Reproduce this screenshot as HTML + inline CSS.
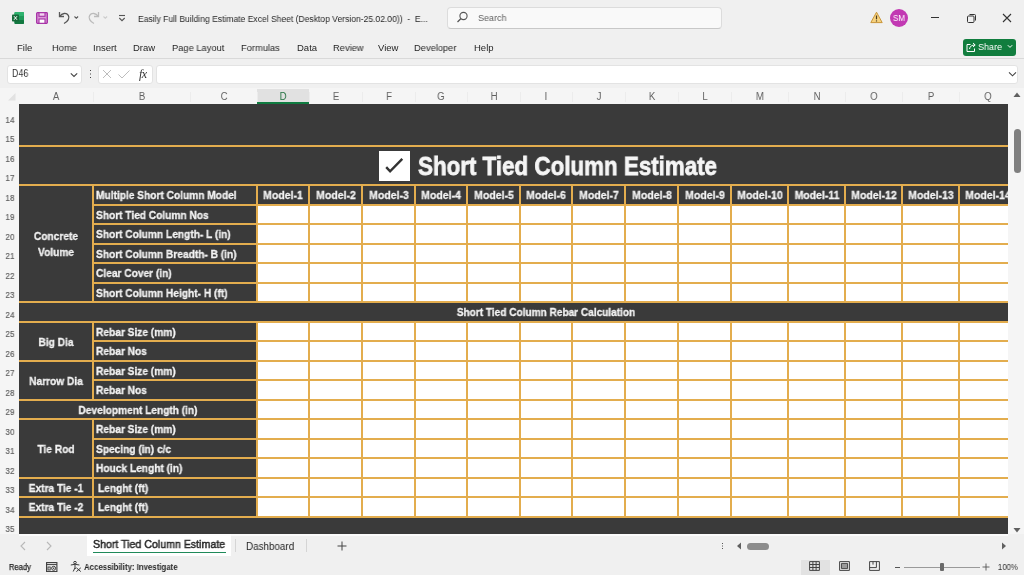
<!DOCTYPE html>
<html><head><meta charset="utf-8"><style>
html,body{margin:0;padding:0;}
body{width:1024px;height:575px;overflow:hidden;position:relative;background:#f0f0f0;font-family:'Liberation Sans', sans-serif;}
div,svg{position:absolute;}
div div, div svg{position:absolute;}
.t{white-space:nowrap;line-height:0;will-change:transform;}
</style></head><body>
<svg style="left:12px;top:12px" width="12" height="12" viewBox="0 0 12 12"><rect x="2.5" y="0" width="9.5" height="12" rx="1.2" fill="#1f9a5a"/><rect x="2.5" y="0" width="9.5" height="4" rx="1" fill="#2fb36f"/><rect x="2.5" y="8" width="9.5" height="4" rx="1" fill="#127840"/><rect x="0" y="2.5" width="7" height="7" rx="0.8" fill="#156b3a"/><path d="M2 4.2 L5 7.8 M5 4.2 L2 7.8" stroke="#fff" stroke-width="1"/></svg>
<svg style="left:36px;top:12px" width="12" height="12" viewBox="0 0 12 12"><rect x="0.7" y="0.7" width="10.6" height="10.6" rx="0.8" fill="#dc9ad8" stroke="#a52fa5" stroke-width="1.3"/><rect x="3" y="0.7" width="6" height="3.6" fill="#f3d6f1" stroke="#a52fa5" stroke-width="1.1"/><rect x="3" y="7" width="6" height="4.3" fill="#fff" stroke="#a52fa5" stroke-width="1.1"/></svg>
<svg style="left:57px;top:10px" width="24" height="15" viewBox="0 0 24 15"><path d="M2.5 2 V6.5 H7" fill="none" stroke="#5a5a5a" stroke-width="1.3"/><path d="M2.8 6.3 C5 3 9.5 2.5 11.3 5.3 C13 8 11 11.5 7 13.5" fill="none" stroke="#555" stroke-width="1.3"/><path d="M17.5 6.5 L19.3 8.3 L21.1 6.5" fill="none" stroke="#555" stroke-width="1.1"/></svg>
<svg style="left:86px;top:10px" width="24" height="15" viewBox="0 0 24 15"><path d="M12.5 2 V6.5 H8" fill="none" stroke="#bbb" stroke-width="1.3"/><path d="M12.2 6.3 C10 3 5.5 2.5 3.7 5.3 C2 8 4 11.5 8 13.5" fill="none" stroke="#bbb" stroke-width="1.3"/><path d="M17.5 6.5 L19.3 8.3 L21.1 6.5" fill="none" stroke="#ccc" stroke-width="1.1"/></svg>
<svg style="left:117px;top:13px" width="10" height="10" viewBox="0 0 10 10"><path d="M2 2.5 H8" stroke="#555" stroke-width="1.1"/><path d="M2.3 5 L5 7.7 L7.7 5" fill="none" stroke="#555" stroke-width="1.1"/></svg>
<div class="t" style="left:137.8px;top:18.71px;font-size:9.2px;font-weight:400;color:#262626;transform:scaleX(0.93);transform-origin:0 0;">Easily Full Building Estimate Excel Sheet (Desktop Version-25.02.00))&nbsp; -&nbsp; E...</div>
<div style="left:446.5px;top:6.5px;width:275px;height:22px;background:#f9f9f9;border:1px solid #dcdcdc;border-bottom-color:#c8c8c8;border-radius:4px;box-sizing:border-box"></div>
<svg style="left:456px;top:11px" width="13" height="13" viewBox="0 0 13 13"><circle cx="7.5" cy="5" r="3.6" fill="none" stroke="#555" stroke-width="1.1"/><path d="M5 7.5 L1.5 11" stroke="#555" stroke-width="1.2"/></svg>
<div class="t" style="left:478px;top:18.21px;font-size:9.5px;font-weight:400;color:#616161;transform:scaleX(0.95);transform-origin:0 0;">Search</div>
<svg style="left:870px;top:11px" width="13" height="13" viewBox="0 0 13 13"><path d="M6.5 1.2 L12.2 11.6 H0.8 Z" fill="#f6d27e" stroke="#c9963a" stroke-width="1" stroke-linejoin="round"/><path d="M6.5 4.5 V8.3" stroke="#4a3a20" stroke-width="1.2"/><circle cx="6.5" cy="9.9" r="0.7" fill="#4a3a20"/></svg>
<div style="left:889.5px;top:8.5px;width:18.5px;height:18.5px;border-radius:50%;background:#c239b3"></div>
<div class="t" style="left:498.6px;width:800px;text-align:center;top:18.02px;font-size:8.6px;font-weight:400;color:#fff;transform:scaleX(0.92);transform-origin:50% 0;">SM</div>
<div style="left:930.5px;top:17px;width:8.5px;height:1px;background:#333"></div>
<svg style="left:966px;top:13px" width="11" height="11" viewBox="0 0 11 11"><rect x="1.5" y="3" width="6.5" height="6.5" rx="1" fill="none" stroke="#333" stroke-width="1"/><path d="M3.5 1.5 H8.5 Q9.5 1.5 9.5 2.5 V7.5" fill="none" stroke="#333" stroke-width="1"/></svg>
<svg style="left:1002px;top:13px" width="10" height="10" viewBox="0 0 10 10"><path d="M1 1 L9 9 M9 1 L1 9" stroke="#333" stroke-width="1.1"/></svg>
<div class="t" style="left:16.7px;top:47.51px;font-size:9.5px;font-weight:400;color:#262626;transform:scaleX(0.98);transform-origin:0 0;">File</div>
<div class="t" style="left:51.5px;top:47.51px;font-size:9.5px;font-weight:400;color:#262626;transform:scaleX(0.98);transform-origin:0 0;">Home</div>
<div class="t" style="left:93px;top:47.51px;font-size:9.5px;font-weight:400;color:#262626;transform:scaleX(0.98);transform-origin:0 0;">Insert</div>
<div class="t" style="left:132.8px;top:47.51px;font-size:9.5px;font-weight:400;color:#262626;transform:scaleX(0.98);transform-origin:0 0;">Draw</div>
<div class="t" style="left:171.6px;top:47.51px;font-size:9.5px;font-weight:400;color:#262626;transform:scaleX(0.98);transform-origin:0 0;">Page Layout</div>
<div class="t" style="left:241.4px;top:47.51px;font-size:9.5px;font-weight:400;color:#262626;transform:scaleX(0.98);transform-origin:0 0;">Formulas</div>
<div class="t" style="left:297.2px;top:47.51px;font-size:9.5px;font-weight:400;color:#262626;transform:scaleX(0.98);transform-origin:0 0;">Data</div>
<div class="t" style="left:333.4px;top:47.51px;font-size:9.5px;font-weight:400;color:#262626;transform:scaleX(0.98);transform-origin:0 0;">Review</div>
<div class="t" style="left:378.3px;top:47.51px;font-size:9.5px;font-weight:400;color:#262626;transform:scaleX(0.98);transform-origin:0 0;">View</div>
<div class="t" style="left:413.5px;top:47.51px;font-size:9.5px;font-weight:400;color:#262626;transform:scaleX(0.98);transform-origin:0 0;">Developer</div>
<div class="t" style="left:474px;top:47.51px;font-size:9.5px;font-weight:400;color:#262626;transform:scaleX(0.98);transform-origin:0 0;">Help</div>
<div style="left:962.5px;top:38.5px;width:53px;height:17.5px;border-radius:3px;background:#117d3e"></div>
<svg style="left:965px;top:41px" width="12" height="12" viewBox="0 0 12 12"><path d="M5.5 3.5 H2 V10.5 H9.5 V7.5" fill="none" stroke="#fff" stroke-width="1"/><path d="M4.5 8 C5 5 7 4 10 4 M8 2 L10.2 4 L8 6" fill="none" stroke="#fff" stroke-width="1"/></svg>
<div class="t" style="left:978.3px;top:47.21px;font-size:9.5px;font-weight:400;color:#fff;transform:scaleX(0.95);transform-origin:0 0;">Share</div>
<svg style="left:1007px;top:44px" width="6" height="5" viewBox="0 0 6 5"><path d="M0.8 1.2 L3 3.4 L5.2 1.2" fill="none" stroke="#fff" stroke-width="1"/></svg>
<div style="left:0;top:58px;width:1024px;height:1px;background:#d9d9d9"></div>
<div style="left:6.5px;top:64.5px;width:75px;height:19px;background:#fff;border:1px solid #e3e3e3;border-radius:3px;box-sizing:border-box"></div>
<div class="t" style="left:11.7px;top:74.43px;font-size:10.3px;font-weight:400;color:#333;transform:scaleX(0.86);transform-origin:0 0;">D46</div>
<svg style="left:70px;top:72px" width="8" height="6" viewBox="0 0 8 6"><path d="M0.8 1.3 L4 4.5 L7.2 1.3" fill="none" stroke="#444" stroke-width="1.1"/></svg>
<div style="left:89.5px;top:70px;width:1.3px;height:1.3px;background:#444;box-shadow:0 3.5px 0 #444,0 7px 0 #444"></div>
<div style="left:97.5px;top:64.5px;width:55px;height:19px;background:#fff;border:1px solid #e3e3e3;border-radius:3px;box-sizing:border-box"></div>
<svg style="left:101px;top:68px" width="12" height="12" viewBox="0 0 12 12"><path d="M2 2 L10 10 M10 2 L2 10" stroke="#bdbdbd" stroke-width="1"/></svg>
<svg style="left:117px;top:68px" width="14" height="12" viewBox="0 0 14 12"><path d="M1.5 6.5 L5 10 L12.5 2.5" fill="none" stroke="#bdbdbd" stroke-width="1"/></svg>
<div class="t" style="left:138.8px;top:74.04px;font-size:12px;font-weight:400;color:#333;transform:scaleX(1.0);transform-origin:0 0;font-family:'Liberation Serif';font-style:italic;letter-spacing:-0.5px;">fx</div>
<div style="left:156px;top:64.5px;width:862px;height:19px;background:#fff;border:1px solid #e3e3e3;border-radius:3px;box-sizing:border-box"></div>
<svg style="left:1007.5px;top:70.5px" width="9" height="6" viewBox="0 0 9 6"><path d="M1 1.3 L4.5 4.8 L8 1.3" fill="none" stroke="#444" stroke-width="1.1"/></svg>
<div style="left:0;top:88px;width:1008px;height:16px;background:#f5f5f5"></div>
<div style="left:257px;top:89px;width:52px;height:15px;background:#e1e1e1"></div>
<div style="left:257px;top:102px;width:52px;height:2px;background:#107c41"></div>
<div class="t" style="left:-344.0px;width:800px;text-align:center;top:96.63px;font-size:10px;font-weight:400;color:#5f5f5f;transform:scaleX(0.95);transform-origin:50% 0;">A</div>
<div style="left:93px;top:92px;width:1px;height:10px;background:#ececec"></div>
<div class="t" style="left:-258.5px;width:800px;text-align:center;top:96.63px;font-size:10px;font-weight:400;color:#5f5f5f;transform:scaleX(0.95);transform-origin:50% 0;">B</div>
<div style="left:190px;top:92px;width:1px;height:10px;background:#ececec"></div>
<div class="t" style="left:-176.5px;width:800px;text-align:center;top:96.63px;font-size:10px;font-weight:400;color:#5f5f5f;transform:scaleX(0.95);transform-origin:50% 0;">C</div>
<div style="left:257px;top:92px;width:1px;height:10px;background:#ececec"></div>
<div class="t" style="left:-117.0px;width:800px;text-align:center;top:96.63px;font-size:10px;font-weight:400;color:#1e6e3c;transform:scaleX(0.95);transform-origin:50% 0;">D</div>
<div style="left:309px;top:92px;width:1px;height:10px;background:#ececec"></div>
<div class="t" style="left:-64.5px;width:800px;text-align:center;top:96.63px;font-size:10px;font-weight:400;color:#5f5f5f;transform:scaleX(0.95);transform-origin:50% 0;">E</div>
<div style="left:362px;top:92px;width:1px;height:10px;background:#ececec"></div>
<div class="t" style="left:-11.5px;width:800px;text-align:center;top:96.63px;font-size:10px;font-weight:400;color:#5f5f5f;transform:scaleX(0.95);transform-origin:50% 0;">F</div>
<div style="left:415px;top:92px;width:1px;height:10px;background:#ececec"></div>
<div class="t" style="left:41.0px;width:800px;text-align:center;top:96.63px;font-size:10px;font-weight:400;color:#5f5f5f;transform:scaleX(0.95);transform-origin:50% 0;">G</div>
<div style="left:467px;top:92px;width:1px;height:10px;background:#ececec"></div>
<div class="t" style="left:93.5px;width:800px;text-align:center;top:96.63px;font-size:10px;font-weight:400;color:#5f5f5f;transform:scaleX(0.95);transform-origin:50% 0;">H</div>
<div style="left:520px;top:92px;width:1px;height:10px;background:#ececec"></div>
<div class="t" style="left:146.0px;width:800px;text-align:center;top:96.63px;font-size:10px;font-weight:400;color:#5f5f5f;transform:scaleX(0.95);transform-origin:50% 0;">I</div>
<div style="left:572px;top:92px;width:1px;height:10px;background:#ececec"></div>
<div class="t" style="left:198.5px;width:800px;text-align:center;top:96.63px;font-size:10px;font-weight:400;color:#5f5f5f;transform:scaleX(0.95);transform-origin:50% 0;">J</div>
<div style="left:625px;top:92px;width:1px;height:10px;background:#ececec"></div>
<div class="t" style="left:251.5px;width:800px;text-align:center;top:96.63px;font-size:10px;font-weight:400;color:#5f5f5f;transform:scaleX(0.95);transform-origin:50% 0;">K</div>
<div style="left:678px;top:92px;width:1px;height:10px;background:#ececec"></div>
<div class="t" style="left:304.5px;width:800px;text-align:center;top:96.63px;font-size:10px;font-weight:400;color:#5f5f5f;transform:scaleX(0.95);transform-origin:50% 0;">L</div>
<div style="left:731px;top:92px;width:1px;height:10px;background:#ececec"></div>
<div class="t" style="left:359.5px;width:800px;text-align:center;top:96.63px;font-size:10px;font-weight:400;color:#5f5f5f;transform:scaleX(0.95);transform-origin:50% 0;">M</div>
<div style="left:788px;top:92px;width:1px;height:10px;background:#ececec"></div>
<div class="t" style="left:416.5px;width:800px;text-align:center;top:96.63px;font-size:10px;font-weight:400;color:#5f5f5f;transform:scaleX(0.95);transform-origin:50% 0;">N</div>
<div style="left:845px;top:92px;width:1px;height:10px;background:#ececec"></div>
<div class="t" style="left:473.5px;width:800px;text-align:center;top:96.63px;font-size:10px;font-weight:400;color:#5f5f5f;transform:scaleX(0.95);transform-origin:50% 0;">O</div>
<div style="left:902px;top:92px;width:1px;height:10px;background:#ececec"></div>
<div class="t" style="left:530.5px;width:800px;text-align:center;top:96.63px;font-size:10px;font-weight:400;color:#5f5f5f;transform:scaleX(0.95);transform-origin:50% 0;">P</div>
<div style="left:959px;top:92px;width:1px;height:10px;background:#ececec"></div>
<div class="t" style="left:587.5px;width:800px;text-align:center;top:96.63px;font-size:10px;font-weight:400;color:#5f5f5f;transform:scaleX(0.95);transform-origin:50% 0;">Q</div>
<svg style="left:6px;top:90px" width="12" height="13" viewBox="0 0 12 13"><path d="M11 2 L11 11 L2 11 Z" fill="#e6e6e6"/></svg>
<div style="left:0;top:104px;width:19px;height:430px;background:#f5f5f5"></div>
<div class="t" style="left:-389.7px;width:800px;text-align:center;top:100.44px;font-size:9.7px;font-weight:400;color:#5f5f5f;transform:scaleX(0.84);transform-origin:50% 0;-webkit-text-stroke:0.2px #5f5f5f;">13</div>
<div class="t" style="left:-389.7px;width:800px;text-align:center;top:119.94px;font-size:9.7px;font-weight:400;color:#5f5f5f;transform:scaleX(0.84);transform-origin:50% 0;-webkit-text-stroke:0.2px #5f5f5f;">14</div>
<div class="t" style="left:-389.7px;width:800px;text-align:center;top:139.44px;font-size:9.7px;font-weight:400;color:#5f5f5f;transform:scaleX(0.84);transform-origin:50% 0;-webkit-text-stroke:0.2px #5f5f5f;">15</div>
<div class="t" style="left:-389.7px;width:800px;text-align:center;top:158.94px;font-size:9.7px;font-weight:400;color:#5f5f5f;transform:scaleX(0.84);transform-origin:50% 0;-webkit-text-stroke:0.2px #5f5f5f;">16</div>
<div class="t" style="left:-389.7px;width:800px;text-align:center;top:178.44px;font-size:9.7px;font-weight:400;color:#5f5f5f;transform:scaleX(0.84);transform-origin:50% 0;-webkit-text-stroke:0.2px #5f5f5f;">17</div>
<div class="t" style="left:-389.7px;width:800px;text-align:center;top:197.94px;font-size:9.7px;font-weight:400;color:#5f5f5f;transform:scaleX(0.84);transform-origin:50% 0;-webkit-text-stroke:0.2px #5f5f5f;">18</div>
<div class="t" style="left:-389.7px;width:800px;text-align:center;top:217.44px;font-size:9.7px;font-weight:400;color:#5f5f5f;transform:scaleX(0.84);transform-origin:50% 0;-webkit-text-stroke:0.2px #5f5f5f;">19</div>
<div class="t" style="left:-389.7px;width:800px;text-align:center;top:236.94px;font-size:9.7px;font-weight:400;color:#5f5f5f;transform:scaleX(0.84);transform-origin:50% 0;-webkit-text-stroke:0.2px #5f5f5f;">20</div>
<div class="t" style="left:-389.7px;width:800px;text-align:center;top:256.44px;font-size:9.7px;font-weight:400;color:#5f5f5f;transform:scaleX(0.84);transform-origin:50% 0;-webkit-text-stroke:0.2px #5f5f5f;">21</div>
<div class="t" style="left:-389.7px;width:800px;text-align:center;top:275.94px;font-size:9.7px;font-weight:400;color:#5f5f5f;transform:scaleX(0.84);transform-origin:50% 0;-webkit-text-stroke:0.2px #5f5f5f;">22</div>
<div class="t" style="left:-389.7px;width:800px;text-align:center;top:295.44px;font-size:9.7px;font-weight:400;color:#5f5f5f;transform:scaleX(0.84);transform-origin:50% 0;-webkit-text-stroke:0.2px #5f5f5f;">23</div>
<div class="t" style="left:-389.7px;width:800px;text-align:center;top:314.94px;font-size:9.7px;font-weight:400;color:#5f5f5f;transform:scaleX(0.84);transform-origin:50% 0;-webkit-text-stroke:0.2px #5f5f5f;">24</div>
<div class="t" style="left:-389.7px;width:800px;text-align:center;top:334.44px;font-size:9.7px;font-weight:400;color:#5f5f5f;transform:scaleX(0.84);transform-origin:50% 0;-webkit-text-stroke:0.2px #5f5f5f;">25</div>
<div class="t" style="left:-389.7px;width:800px;text-align:center;top:353.94px;font-size:9.7px;font-weight:400;color:#5f5f5f;transform:scaleX(0.84);transform-origin:50% 0;-webkit-text-stroke:0.2px #5f5f5f;">26</div>
<div class="t" style="left:-389.7px;width:800px;text-align:center;top:373.44px;font-size:9.7px;font-weight:400;color:#5f5f5f;transform:scaleX(0.84);transform-origin:50% 0;-webkit-text-stroke:0.2px #5f5f5f;">27</div>
<div class="t" style="left:-389.7px;width:800px;text-align:center;top:392.94px;font-size:9.7px;font-weight:400;color:#5f5f5f;transform:scaleX(0.84);transform-origin:50% 0;-webkit-text-stroke:0.2px #5f5f5f;">28</div>
<div class="t" style="left:-389.7px;width:800px;text-align:center;top:412.44px;font-size:9.7px;font-weight:400;color:#5f5f5f;transform:scaleX(0.84);transform-origin:50% 0;-webkit-text-stroke:0.2px #5f5f5f;">29</div>
<div class="t" style="left:-389.7px;width:800px;text-align:center;top:431.94px;font-size:9.7px;font-weight:400;color:#5f5f5f;transform:scaleX(0.84);transform-origin:50% 0;-webkit-text-stroke:0.2px #5f5f5f;">30</div>
<div class="t" style="left:-389.7px;width:800px;text-align:center;top:451.44px;font-size:9.7px;font-weight:400;color:#5f5f5f;transform:scaleX(0.84);transform-origin:50% 0;-webkit-text-stroke:0.2px #5f5f5f;">31</div>
<div class="t" style="left:-389.7px;width:800px;text-align:center;top:470.94px;font-size:9.7px;font-weight:400;color:#5f5f5f;transform:scaleX(0.84);transform-origin:50% 0;-webkit-text-stroke:0.2px #5f5f5f;">32</div>
<div class="t" style="left:-389.7px;width:800px;text-align:center;top:490.44px;font-size:9.7px;font-weight:400;color:#5f5f5f;transform:scaleX(0.84);transform-origin:50% 0;-webkit-text-stroke:0.2px #5f5f5f;">33</div>
<div class="t" style="left:-389.7px;width:800px;text-align:center;top:509.94px;font-size:9.7px;font-weight:400;color:#5f5f5f;transform:scaleX(0.84);transform-origin:50% 0;-webkit-text-stroke:0.2px #5f5f5f;">34</div>
<div class="t" style="left:-389.7px;width:800px;text-align:center;top:529.44px;font-size:9.7px;font-weight:400;color:#5f5f5f;transform:scaleX(0.84);transform-origin:50% 0;-webkit-text-stroke:0.2px #5f5f5f;">35</div>
<div style="left:0;top:88px;width:19px;height:16px;background:#f5f5f5"></div>
<svg style="left:5px;top:90px" width="12" height="12" viewBox="0 0 12 12"><path d="M10.5 3 L10.5 10.5 L3 10.5 Z" fill="#e2e2e2"/></svg>
<div style="left:19px;top:104px;width:989px;height:430px;background:#3a3a3a;overflow:hidden">
<div style="left:238.00px;top:101.00px;width:759.00px;height:19.00px;background:#fff"></div>
<div style="left:238.00px;top:120.00px;width:759.00px;height:20.00px;background:#fff"></div>
<div style="left:238.00px;top:140.00px;width:759.00px;height:19.00px;background:#fff"></div>
<div style="left:238.00px;top:159.00px;width:759.00px;height:20.00px;background:#fff"></div>
<div style="left:238.00px;top:179.00px;width:759.00px;height:19.00px;background:#fff"></div>
<div style="left:238.00px;top:218.00px;width:759.00px;height:19.00px;background:#fff"></div>
<div style="left:238.00px;top:237.00px;width:759.00px;height:20.00px;background:#fff"></div>
<div style="left:238.00px;top:257.00px;width:759.00px;height:19.00px;background:#fff"></div>
<div style="left:238.00px;top:276.00px;width:759.00px;height:20.00px;background:#fff"></div>
<div style="left:238.00px;top:296.00px;width:759.00px;height:19.00px;background:#fff"></div>
<div style="left:238.00px;top:315.00px;width:759.00px;height:20.00px;background:#fff"></div>
<div style="left:238.00px;top:335.00px;width:759.00px;height:19.00px;background:#fff"></div>
<div style="left:238.00px;top:354.00px;width:759.00px;height:20.00px;background:#fff"></div>
<div style="left:238.00px;top:374.00px;width:759.00px;height:19.00px;background:#fff"></div>
<div style="left:238.00px;top:393.00px;width:759.00px;height:20.00px;background:#fff"></div>
<div style="left:-1.00px;top:41.00px;width:999.00px;height:2.00px;background:#e3ad4e"></div>
<div style="left:-1.00px;top:80.00px;width:999.00px;height:2.00px;background:#e3ad4e"></div>
<div style="left:73.00px;top:100.00px;width:925.00px;height:2.00px;background:#e3ad4e"></div>
<div style="left:73.00px;top:119.00px;width:925.00px;height:2.00px;background:#e3ad4e"></div>
<div style="left:73.00px;top:139.00px;width:925.00px;height:2.00px;background:#e3ad4e"></div>
<div style="left:73.00px;top:158.00px;width:925.00px;height:2.00px;background:#e3ad4e"></div>
<div style="left:73.00px;top:178.00px;width:925.00px;height:2.00px;background:#e3ad4e"></div>
<div style="left:-1.00px;top:197.00px;width:999.00px;height:2.00px;background:#e3ad4e"></div>
<div style="left:-1.00px;top:217.00px;width:999.00px;height:2.00px;background:#e3ad4e"></div>
<div style="left:73.00px;top:236.00px;width:925.00px;height:2.00px;background:#e3ad4e"></div>
<div style="left:-1.00px;top:256.00px;width:999.00px;height:2.00px;background:#e3ad4e"></div>
<div style="left:73.00px;top:275.00px;width:925.00px;height:2.00px;background:#e3ad4e"></div>
<div style="left:-1.00px;top:295.00px;width:999.00px;height:2.00px;background:#e3ad4e"></div>
<div style="left:-1.00px;top:314.00px;width:999.00px;height:2.00px;background:#e3ad4e"></div>
<div style="left:73.00px;top:334.00px;width:925.00px;height:2.00px;background:#e3ad4e"></div>
<div style="left:73.00px;top:353.00px;width:925.00px;height:2.00px;background:#e3ad4e"></div>
<div style="left:-1.00px;top:373.00px;width:999.00px;height:2.00px;background:#e3ad4e"></div>
<div style="left:-1.00px;top:392.00px;width:999.00px;height:2.00px;background:#e3ad4e"></div>
<div style="left:-1.00px;top:412.00px;width:999.00px;height:2.00px;background:#e3ad4e"></div>
<div style="left:73.00px;top:80.00px;width:2.00px;height:22.00px;background:#e3ad4e"></div>
<div style="left:237.00px;top:80.00px;width:2.00px;height:22.00px;background:#e3ad4e"></div>
<div style="left:289.00px;top:80.00px;width:2.00px;height:22.00px;background:#e3ad4e"></div>
<div style="left:342.00px;top:80.00px;width:2.00px;height:22.00px;background:#e3ad4e"></div>
<div style="left:395.00px;top:80.00px;width:2.00px;height:22.00px;background:#e3ad4e"></div>
<div style="left:447.00px;top:80.00px;width:2.00px;height:22.00px;background:#e3ad4e"></div>
<div style="left:500.00px;top:80.00px;width:2.00px;height:22.00px;background:#e3ad4e"></div>
<div style="left:552.00px;top:80.00px;width:2.00px;height:22.00px;background:#e3ad4e"></div>
<div style="left:605.00px;top:80.00px;width:2.00px;height:22.00px;background:#e3ad4e"></div>
<div style="left:658.00px;top:80.00px;width:2.00px;height:22.00px;background:#e3ad4e"></div>
<div style="left:711.00px;top:80.00px;width:2.00px;height:22.00px;background:#e3ad4e"></div>
<div style="left:768.00px;top:80.00px;width:2.00px;height:22.00px;background:#e3ad4e"></div>
<div style="left:825.00px;top:80.00px;width:2.00px;height:22.00px;background:#e3ad4e"></div>
<div style="left:882.00px;top:80.00px;width:2.00px;height:22.00px;background:#e3ad4e"></div>
<div style="left:939.00px;top:80.00px;width:2.00px;height:22.00px;background:#e3ad4e"></div>
<div style="left:73.00px;top:100.00px;width:2.00px;height:21.00px;background:#e3ad4e"></div>
<div style="left:237.00px;top:100.00px;width:2.00px;height:21.00px;background:#e3ad4e"></div>
<div style="left:289.00px;top:100.00px;width:2.00px;height:21.00px;background:#e3ad4e"></div>
<div style="left:342.00px;top:100.00px;width:2.00px;height:21.00px;background:#e3ad4e"></div>
<div style="left:395.00px;top:100.00px;width:2.00px;height:21.00px;background:#e3ad4e"></div>
<div style="left:447.00px;top:100.00px;width:2.00px;height:21.00px;background:#e3ad4e"></div>
<div style="left:500.00px;top:100.00px;width:2.00px;height:21.00px;background:#e3ad4e"></div>
<div style="left:552.00px;top:100.00px;width:2.00px;height:21.00px;background:#e3ad4e"></div>
<div style="left:605.00px;top:100.00px;width:2.00px;height:21.00px;background:#e3ad4e"></div>
<div style="left:658.00px;top:100.00px;width:2.00px;height:21.00px;background:#e3ad4e"></div>
<div style="left:711.00px;top:100.00px;width:2.00px;height:21.00px;background:#e3ad4e"></div>
<div style="left:768.00px;top:100.00px;width:2.00px;height:21.00px;background:#e3ad4e"></div>
<div style="left:825.00px;top:100.00px;width:2.00px;height:21.00px;background:#e3ad4e"></div>
<div style="left:882.00px;top:100.00px;width:2.00px;height:21.00px;background:#e3ad4e"></div>
<div style="left:939.00px;top:100.00px;width:2.00px;height:21.00px;background:#e3ad4e"></div>
<div style="left:73.00px;top:119.00px;width:2.00px;height:22.00px;background:#e3ad4e"></div>
<div style="left:237.00px;top:119.00px;width:2.00px;height:22.00px;background:#e3ad4e"></div>
<div style="left:289.00px;top:119.00px;width:2.00px;height:22.00px;background:#e3ad4e"></div>
<div style="left:342.00px;top:119.00px;width:2.00px;height:22.00px;background:#e3ad4e"></div>
<div style="left:395.00px;top:119.00px;width:2.00px;height:22.00px;background:#e3ad4e"></div>
<div style="left:447.00px;top:119.00px;width:2.00px;height:22.00px;background:#e3ad4e"></div>
<div style="left:500.00px;top:119.00px;width:2.00px;height:22.00px;background:#e3ad4e"></div>
<div style="left:552.00px;top:119.00px;width:2.00px;height:22.00px;background:#e3ad4e"></div>
<div style="left:605.00px;top:119.00px;width:2.00px;height:22.00px;background:#e3ad4e"></div>
<div style="left:658.00px;top:119.00px;width:2.00px;height:22.00px;background:#e3ad4e"></div>
<div style="left:711.00px;top:119.00px;width:2.00px;height:22.00px;background:#e3ad4e"></div>
<div style="left:768.00px;top:119.00px;width:2.00px;height:22.00px;background:#e3ad4e"></div>
<div style="left:825.00px;top:119.00px;width:2.00px;height:22.00px;background:#e3ad4e"></div>
<div style="left:882.00px;top:119.00px;width:2.00px;height:22.00px;background:#e3ad4e"></div>
<div style="left:939.00px;top:119.00px;width:2.00px;height:22.00px;background:#e3ad4e"></div>
<div style="left:73.00px;top:139.00px;width:2.00px;height:21.00px;background:#e3ad4e"></div>
<div style="left:237.00px;top:139.00px;width:2.00px;height:21.00px;background:#e3ad4e"></div>
<div style="left:289.00px;top:139.00px;width:2.00px;height:21.00px;background:#e3ad4e"></div>
<div style="left:342.00px;top:139.00px;width:2.00px;height:21.00px;background:#e3ad4e"></div>
<div style="left:395.00px;top:139.00px;width:2.00px;height:21.00px;background:#e3ad4e"></div>
<div style="left:447.00px;top:139.00px;width:2.00px;height:21.00px;background:#e3ad4e"></div>
<div style="left:500.00px;top:139.00px;width:2.00px;height:21.00px;background:#e3ad4e"></div>
<div style="left:552.00px;top:139.00px;width:2.00px;height:21.00px;background:#e3ad4e"></div>
<div style="left:605.00px;top:139.00px;width:2.00px;height:21.00px;background:#e3ad4e"></div>
<div style="left:658.00px;top:139.00px;width:2.00px;height:21.00px;background:#e3ad4e"></div>
<div style="left:711.00px;top:139.00px;width:2.00px;height:21.00px;background:#e3ad4e"></div>
<div style="left:768.00px;top:139.00px;width:2.00px;height:21.00px;background:#e3ad4e"></div>
<div style="left:825.00px;top:139.00px;width:2.00px;height:21.00px;background:#e3ad4e"></div>
<div style="left:882.00px;top:139.00px;width:2.00px;height:21.00px;background:#e3ad4e"></div>
<div style="left:939.00px;top:139.00px;width:2.00px;height:21.00px;background:#e3ad4e"></div>
<div style="left:73.00px;top:158.00px;width:2.00px;height:22.00px;background:#e3ad4e"></div>
<div style="left:237.00px;top:158.00px;width:2.00px;height:22.00px;background:#e3ad4e"></div>
<div style="left:289.00px;top:158.00px;width:2.00px;height:22.00px;background:#e3ad4e"></div>
<div style="left:342.00px;top:158.00px;width:2.00px;height:22.00px;background:#e3ad4e"></div>
<div style="left:395.00px;top:158.00px;width:2.00px;height:22.00px;background:#e3ad4e"></div>
<div style="left:447.00px;top:158.00px;width:2.00px;height:22.00px;background:#e3ad4e"></div>
<div style="left:500.00px;top:158.00px;width:2.00px;height:22.00px;background:#e3ad4e"></div>
<div style="left:552.00px;top:158.00px;width:2.00px;height:22.00px;background:#e3ad4e"></div>
<div style="left:605.00px;top:158.00px;width:2.00px;height:22.00px;background:#e3ad4e"></div>
<div style="left:658.00px;top:158.00px;width:2.00px;height:22.00px;background:#e3ad4e"></div>
<div style="left:711.00px;top:158.00px;width:2.00px;height:22.00px;background:#e3ad4e"></div>
<div style="left:768.00px;top:158.00px;width:2.00px;height:22.00px;background:#e3ad4e"></div>
<div style="left:825.00px;top:158.00px;width:2.00px;height:22.00px;background:#e3ad4e"></div>
<div style="left:882.00px;top:158.00px;width:2.00px;height:22.00px;background:#e3ad4e"></div>
<div style="left:939.00px;top:158.00px;width:2.00px;height:22.00px;background:#e3ad4e"></div>
<div style="left:73.00px;top:178.00px;width:2.00px;height:21.00px;background:#e3ad4e"></div>
<div style="left:237.00px;top:178.00px;width:2.00px;height:21.00px;background:#e3ad4e"></div>
<div style="left:289.00px;top:178.00px;width:2.00px;height:21.00px;background:#e3ad4e"></div>
<div style="left:342.00px;top:178.00px;width:2.00px;height:21.00px;background:#e3ad4e"></div>
<div style="left:395.00px;top:178.00px;width:2.00px;height:21.00px;background:#e3ad4e"></div>
<div style="left:447.00px;top:178.00px;width:2.00px;height:21.00px;background:#e3ad4e"></div>
<div style="left:500.00px;top:178.00px;width:2.00px;height:21.00px;background:#e3ad4e"></div>
<div style="left:552.00px;top:178.00px;width:2.00px;height:21.00px;background:#e3ad4e"></div>
<div style="left:605.00px;top:178.00px;width:2.00px;height:21.00px;background:#e3ad4e"></div>
<div style="left:658.00px;top:178.00px;width:2.00px;height:21.00px;background:#e3ad4e"></div>
<div style="left:711.00px;top:178.00px;width:2.00px;height:21.00px;background:#e3ad4e"></div>
<div style="left:768.00px;top:178.00px;width:2.00px;height:21.00px;background:#e3ad4e"></div>
<div style="left:825.00px;top:178.00px;width:2.00px;height:21.00px;background:#e3ad4e"></div>
<div style="left:882.00px;top:178.00px;width:2.00px;height:21.00px;background:#e3ad4e"></div>
<div style="left:939.00px;top:178.00px;width:2.00px;height:21.00px;background:#e3ad4e"></div>
<div style="left:73.00px;top:217.00px;width:2.00px;height:21.00px;background:#e3ad4e"></div>
<div style="left:237.00px;top:217.00px;width:2.00px;height:21.00px;background:#e3ad4e"></div>
<div style="left:289.00px;top:217.00px;width:2.00px;height:21.00px;background:#e3ad4e"></div>
<div style="left:342.00px;top:217.00px;width:2.00px;height:21.00px;background:#e3ad4e"></div>
<div style="left:395.00px;top:217.00px;width:2.00px;height:21.00px;background:#e3ad4e"></div>
<div style="left:447.00px;top:217.00px;width:2.00px;height:21.00px;background:#e3ad4e"></div>
<div style="left:500.00px;top:217.00px;width:2.00px;height:21.00px;background:#e3ad4e"></div>
<div style="left:552.00px;top:217.00px;width:2.00px;height:21.00px;background:#e3ad4e"></div>
<div style="left:605.00px;top:217.00px;width:2.00px;height:21.00px;background:#e3ad4e"></div>
<div style="left:658.00px;top:217.00px;width:2.00px;height:21.00px;background:#e3ad4e"></div>
<div style="left:711.00px;top:217.00px;width:2.00px;height:21.00px;background:#e3ad4e"></div>
<div style="left:768.00px;top:217.00px;width:2.00px;height:21.00px;background:#e3ad4e"></div>
<div style="left:825.00px;top:217.00px;width:2.00px;height:21.00px;background:#e3ad4e"></div>
<div style="left:882.00px;top:217.00px;width:2.00px;height:21.00px;background:#e3ad4e"></div>
<div style="left:939.00px;top:217.00px;width:2.00px;height:21.00px;background:#e3ad4e"></div>
<div style="left:73.00px;top:236.00px;width:2.00px;height:22.00px;background:#e3ad4e"></div>
<div style="left:237.00px;top:236.00px;width:2.00px;height:22.00px;background:#e3ad4e"></div>
<div style="left:289.00px;top:236.00px;width:2.00px;height:22.00px;background:#e3ad4e"></div>
<div style="left:342.00px;top:236.00px;width:2.00px;height:22.00px;background:#e3ad4e"></div>
<div style="left:395.00px;top:236.00px;width:2.00px;height:22.00px;background:#e3ad4e"></div>
<div style="left:447.00px;top:236.00px;width:2.00px;height:22.00px;background:#e3ad4e"></div>
<div style="left:500.00px;top:236.00px;width:2.00px;height:22.00px;background:#e3ad4e"></div>
<div style="left:552.00px;top:236.00px;width:2.00px;height:22.00px;background:#e3ad4e"></div>
<div style="left:605.00px;top:236.00px;width:2.00px;height:22.00px;background:#e3ad4e"></div>
<div style="left:658.00px;top:236.00px;width:2.00px;height:22.00px;background:#e3ad4e"></div>
<div style="left:711.00px;top:236.00px;width:2.00px;height:22.00px;background:#e3ad4e"></div>
<div style="left:768.00px;top:236.00px;width:2.00px;height:22.00px;background:#e3ad4e"></div>
<div style="left:825.00px;top:236.00px;width:2.00px;height:22.00px;background:#e3ad4e"></div>
<div style="left:882.00px;top:236.00px;width:2.00px;height:22.00px;background:#e3ad4e"></div>
<div style="left:939.00px;top:236.00px;width:2.00px;height:22.00px;background:#e3ad4e"></div>
<div style="left:73.00px;top:256.00px;width:2.00px;height:21.00px;background:#e3ad4e"></div>
<div style="left:237.00px;top:256.00px;width:2.00px;height:21.00px;background:#e3ad4e"></div>
<div style="left:289.00px;top:256.00px;width:2.00px;height:21.00px;background:#e3ad4e"></div>
<div style="left:342.00px;top:256.00px;width:2.00px;height:21.00px;background:#e3ad4e"></div>
<div style="left:395.00px;top:256.00px;width:2.00px;height:21.00px;background:#e3ad4e"></div>
<div style="left:447.00px;top:256.00px;width:2.00px;height:21.00px;background:#e3ad4e"></div>
<div style="left:500.00px;top:256.00px;width:2.00px;height:21.00px;background:#e3ad4e"></div>
<div style="left:552.00px;top:256.00px;width:2.00px;height:21.00px;background:#e3ad4e"></div>
<div style="left:605.00px;top:256.00px;width:2.00px;height:21.00px;background:#e3ad4e"></div>
<div style="left:658.00px;top:256.00px;width:2.00px;height:21.00px;background:#e3ad4e"></div>
<div style="left:711.00px;top:256.00px;width:2.00px;height:21.00px;background:#e3ad4e"></div>
<div style="left:768.00px;top:256.00px;width:2.00px;height:21.00px;background:#e3ad4e"></div>
<div style="left:825.00px;top:256.00px;width:2.00px;height:21.00px;background:#e3ad4e"></div>
<div style="left:882.00px;top:256.00px;width:2.00px;height:21.00px;background:#e3ad4e"></div>
<div style="left:939.00px;top:256.00px;width:2.00px;height:21.00px;background:#e3ad4e"></div>
<div style="left:73.00px;top:275.00px;width:2.00px;height:22.00px;background:#e3ad4e"></div>
<div style="left:237.00px;top:275.00px;width:2.00px;height:22.00px;background:#e3ad4e"></div>
<div style="left:289.00px;top:275.00px;width:2.00px;height:22.00px;background:#e3ad4e"></div>
<div style="left:342.00px;top:275.00px;width:2.00px;height:22.00px;background:#e3ad4e"></div>
<div style="left:395.00px;top:275.00px;width:2.00px;height:22.00px;background:#e3ad4e"></div>
<div style="left:447.00px;top:275.00px;width:2.00px;height:22.00px;background:#e3ad4e"></div>
<div style="left:500.00px;top:275.00px;width:2.00px;height:22.00px;background:#e3ad4e"></div>
<div style="left:552.00px;top:275.00px;width:2.00px;height:22.00px;background:#e3ad4e"></div>
<div style="left:605.00px;top:275.00px;width:2.00px;height:22.00px;background:#e3ad4e"></div>
<div style="left:658.00px;top:275.00px;width:2.00px;height:22.00px;background:#e3ad4e"></div>
<div style="left:711.00px;top:275.00px;width:2.00px;height:22.00px;background:#e3ad4e"></div>
<div style="left:768.00px;top:275.00px;width:2.00px;height:22.00px;background:#e3ad4e"></div>
<div style="left:825.00px;top:275.00px;width:2.00px;height:22.00px;background:#e3ad4e"></div>
<div style="left:882.00px;top:275.00px;width:2.00px;height:22.00px;background:#e3ad4e"></div>
<div style="left:939.00px;top:275.00px;width:2.00px;height:22.00px;background:#e3ad4e"></div>
<div style="left:237.00px;top:295.00px;width:2.00px;height:21.00px;background:#e3ad4e"></div>
<div style="left:289.00px;top:295.00px;width:2.00px;height:21.00px;background:#e3ad4e"></div>
<div style="left:342.00px;top:295.00px;width:2.00px;height:21.00px;background:#e3ad4e"></div>
<div style="left:395.00px;top:295.00px;width:2.00px;height:21.00px;background:#e3ad4e"></div>
<div style="left:447.00px;top:295.00px;width:2.00px;height:21.00px;background:#e3ad4e"></div>
<div style="left:500.00px;top:295.00px;width:2.00px;height:21.00px;background:#e3ad4e"></div>
<div style="left:552.00px;top:295.00px;width:2.00px;height:21.00px;background:#e3ad4e"></div>
<div style="left:605.00px;top:295.00px;width:2.00px;height:21.00px;background:#e3ad4e"></div>
<div style="left:658.00px;top:295.00px;width:2.00px;height:21.00px;background:#e3ad4e"></div>
<div style="left:711.00px;top:295.00px;width:2.00px;height:21.00px;background:#e3ad4e"></div>
<div style="left:768.00px;top:295.00px;width:2.00px;height:21.00px;background:#e3ad4e"></div>
<div style="left:825.00px;top:295.00px;width:2.00px;height:21.00px;background:#e3ad4e"></div>
<div style="left:882.00px;top:295.00px;width:2.00px;height:21.00px;background:#e3ad4e"></div>
<div style="left:939.00px;top:295.00px;width:2.00px;height:21.00px;background:#e3ad4e"></div>
<div style="left:73.00px;top:314.00px;width:2.00px;height:22.00px;background:#e3ad4e"></div>
<div style="left:237.00px;top:314.00px;width:2.00px;height:22.00px;background:#e3ad4e"></div>
<div style="left:289.00px;top:314.00px;width:2.00px;height:22.00px;background:#e3ad4e"></div>
<div style="left:342.00px;top:314.00px;width:2.00px;height:22.00px;background:#e3ad4e"></div>
<div style="left:395.00px;top:314.00px;width:2.00px;height:22.00px;background:#e3ad4e"></div>
<div style="left:447.00px;top:314.00px;width:2.00px;height:22.00px;background:#e3ad4e"></div>
<div style="left:500.00px;top:314.00px;width:2.00px;height:22.00px;background:#e3ad4e"></div>
<div style="left:552.00px;top:314.00px;width:2.00px;height:22.00px;background:#e3ad4e"></div>
<div style="left:605.00px;top:314.00px;width:2.00px;height:22.00px;background:#e3ad4e"></div>
<div style="left:658.00px;top:314.00px;width:2.00px;height:22.00px;background:#e3ad4e"></div>
<div style="left:711.00px;top:314.00px;width:2.00px;height:22.00px;background:#e3ad4e"></div>
<div style="left:768.00px;top:314.00px;width:2.00px;height:22.00px;background:#e3ad4e"></div>
<div style="left:825.00px;top:314.00px;width:2.00px;height:22.00px;background:#e3ad4e"></div>
<div style="left:882.00px;top:314.00px;width:2.00px;height:22.00px;background:#e3ad4e"></div>
<div style="left:939.00px;top:314.00px;width:2.00px;height:22.00px;background:#e3ad4e"></div>
<div style="left:73.00px;top:334.00px;width:2.00px;height:21.00px;background:#e3ad4e"></div>
<div style="left:237.00px;top:334.00px;width:2.00px;height:21.00px;background:#e3ad4e"></div>
<div style="left:289.00px;top:334.00px;width:2.00px;height:21.00px;background:#e3ad4e"></div>
<div style="left:342.00px;top:334.00px;width:2.00px;height:21.00px;background:#e3ad4e"></div>
<div style="left:395.00px;top:334.00px;width:2.00px;height:21.00px;background:#e3ad4e"></div>
<div style="left:447.00px;top:334.00px;width:2.00px;height:21.00px;background:#e3ad4e"></div>
<div style="left:500.00px;top:334.00px;width:2.00px;height:21.00px;background:#e3ad4e"></div>
<div style="left:552.00px;top:334.00px;width:2.00px;height:21.00px;background:#e3ad4e"></div>
<div style="left:605.00px;top:334.00px;width:2.00px;height:21.00px;background:#e3ad4e"></div>
<div style="left:658.00px;top:334.00px;width:2.00px;height:21.00px;background:#e3ad4e"></div>
<div style="left:711.00px;top:334.00px;width:2.00px;height:21.00px;background:#e3ad4e"></div>
<div style="left:768.00px;top:334.00px;width:2.00px;height:21.00px;background:#e3ad4e"></div>
<div style="left:825.00px;top:334.00px;width:2.00px;height:21.00px;background:#e3ad4e"></div>
<div style="left:882.00px;top:334.00px;width:2.00px;height:21.00px;background:#e3ad4e"></div>
<div style="left:939.00px;top:334.00px;width:2.00px;height:21.00px;background:#e3ad4e"></div>
<div style="left:73.00px;top:353.00px;width:2.00px;height:22.00px;background:#e3ad4e"></div>
<div style="left:237.00px;top:353.00px;width:2.00px;height:22.00px;background:#e3ad4e"></div>
<div style="left:289.00px;top:353.00px;width:2.00px;height:22.00px;background:#e3ad4e"></div>
<div style="left:342.00px;top:353.00px;width:2.00px;height:22.00px;background:#e3ad4e"></div>
<div style="left:395.00px;top:353.00px;width:2.00px;height:22.00px;background:#e3ad4e"></div>
<div style="left:447.00px;top:353.00px;width:2.00px;height:22.00px;background:#e3ad4e"></div>
<div style="left:500.00px;top:353.00px;width:2.00px;height:22.00px;background:#e3ad4e"></div>
<div style="left:552.00px;top:353.00px;width:2.00px;height:22.00px;background:#e3ad4e"></div>
<div style="left:605.00px;top:353.00px;width:2.00px;height:22.00px;background:#e3ad4e"></div>
<div style="left:658.00px;top:353.00px;width:2.00px;height:22.00px;background:#e3ad4e"></div>
<div style="left:711.00px;top:353.00px;width:2.00px;height:22.00px;background:#e3ad4e"></div>
<div style="left:768.00px;top:353.00px;width:2.00px;height:22.00px;background:#e3ad4e"></div>
<div style="left:825.00px;top:353.00px;width:2.00px;height:22.00px;background:#e3ad4e"></div>
<div style="left:882.00px;top:353.00px;width:2.00px;height:22.00px;background:#e3ad4e"></div>
<div style="left:939.00px;top:353.00px;width:2.00px;height:22.00px;background:#e3ad4e"></div>
<div style="left:73.00px;top:373.00px;width:2.00px;height:21.00px;background:#e3ad4e"></div>
<div style="left:237.00px;top:373.00px;width:2.00px;height:21.00px;background:#e3ad4e"></div>
<div style="left:289.00px;top:373.00px;width:2.00px;height:21.00px;background:#e3ad4e"></div>
<div style="left:342.00px;top:373.00px;width:2.00px;height:21.00px;background:#e3ad4e"></div>
<div style="left:395.00px;top:373.00px;width:2.00px;height:21.00px;background:#e3ad4e"></div>
<div style="left:447.00px;top:373.00px;width:2.00px;height:21.00px;background:#e3ad4e"></div>
<div style="left:500.00px;top:373.00px;width:2.00px;height:21.00px;background:#e3ad4e"></div>
<div style="left:552.00px;top:373.00px;width:2.00px;height:21.00px;background:#e3ad4e"></div>
<div style="left:605.00px;top:373.00px;width:2.00px;height:21.00px;background:#e3ad4e"></div>
<div style="left:658.00px;top:373.00px;width:2.00px;height:21.00px;background:#e3ad4e"></div>
<div style="left:711.00px;top:373.00px;width:2.00px;height:21.00px;background:#e3ad4e"></div>
<div style="left:768.00px;top:373.00px;width:2.00px;height:21.00px;background:#e3ad4e"></div>
<div style="left:825.00px;top:373.00px;width:2.00px;height:21.00px;background:#e3ad4e"></div>
<div style="left:882.00px;top:373.00px;width:2.00px;height:21.00px;background:#e3ad4e"></div>
<div style="left:939.00px;top:373.00px;width:2.00px;height:21.00px;background:#e3ad4e"></div>
<div style="left:73.00px;top:392.00px;width:2.00px;height:22.00px;background:#e3ad4e"></div>
<div style="left:237.00px;top:392.00px;width:2.00px;height:22.00px;background:#e3ad4e"></div>
<div style="left:289.00px;top:392.00px;width:2.00px;height:22.00px;background:#e3ad4e"></div>
<div style="left:342.00px;top:392.00px;width:2.00px;height:22.00px;background:#e3ad4e"></div>
<div style="left:395.00px;top:392.00px;width:2.00px;height:22.00px;background:#e3ad4e"></div>
<div style="left:447.00px;top:392.00px;width:2.00px;height:22.00px;background:#e3ad4e"></div>
<div style="left:500.00px;top:392.00px;width:2.00px;height:22.00px;background:#e3ad4e"></div>
<div style="left:552.00px;top:392.00px;width:2.00px;height:22.00px;background:#e3ad4e"></div>
<div style="left:605.00px;top:392.00px;width:2.00px;height:22.00px;background:#e3ad4e"></div>
<div style="left:658.00px;top:392.00px;width:2.00px;height:22.00px;background:#e3ad4e"></div>
<div style="left:711.00px;top:392.00px;width:2.00px;height:22.00px;background:#e3ad4e"></div>
<div style="left:768.00px;top:392.00px;width:2.00px;height:22.00px;background:#e3ad4e"></div>
<div style="left:825.00px;top:392.00px;width:2.00px;height:22.00px;background:#e3ad4e"></div>
<div style="left:882.00px;top:392.00px;width:2.00px;height:22.00px;background:#e3ad4e"></div>
<div style="left:939.00px;top:392.00px;width:2.00px;height:22.00px;background:#e3ad4e"></div>
<div style="left:360.00px;top:46.50px;width:30.50px;height:30.00px;background:#fff"></div>
<svg style="left:366px;top:53.5px" width="19" height="16" viewBox="0 0 19 16"><path d="M1.2 9.2 L5.1 13.3 L17.3 0.9" fill="none" stroke="#333" stroke-width="2.4"/></svg>
<div class="t" style="left:398.5px;top:62.26px;font-size:25.8px;font-weight:700;color:#f5f5f5;transform:scaleX(0.867);transform-origin:0 0;-webkit-text-stroke:0.8px #f5f5f5;">Short Tied Column Estimate</div>
<div class="t" style="left:76.9px;top:91.39px;font-size:10.7px;font-weight:700;color:#f3f3f3;transform:scaleX(0.951);transform-origin:0 0;-webkit-text-stroke:0.3px #f3f3f3;">Multiple Short Column Model</div>
<div class="t" style="left:-136.0px;width:800px;text-align:center;top:91.39px;font-size:10.7px;font-weight:700;color:#f3f3f3;transform:scaleX(0.98);transform-origin:50% 0;-webkit-text-stroke:0.3px #f3f3f3;">Model-1</div>
<div class="t" style="left:-83.5px;width:800px;text-align:center;top:91.39px;font-size:10.7px;font-weight:700;color:#f3f3f3;transform:scaleX(0.98);transform-origin:50% 0;-webkit-text-stroke:0.3px #f3f3f3;">Model-2</div>
<div class="t" style="left:-30.5px;width:800px;text-align:center;top:91.39px;font-size:10.7px;font-weight:700;color:#f3f3f3;transform:scaleX(0.98);transform-origin:50% 0;-webkit-text-stroke:0.3px #f3f3f3;">Model-3</div>
<div class="t" style="left:22.0px;width:800px;text-align:center;top:91.39px;font-size:10.7px;font-weight:700;color:#f3f3f3;transform:scaleX(0.98);transform-origin:50% 0;-webkit-text-stroke:0.3px #f3f3f3;">Model-4</div>
<div class="t" style="left:74.5px;width:800px;text-align:center;top:91.39px;font-size:10.7px;font-weight:700;color:#f3f3f3;transform:scaleX(0.98);transform-origin:50% 0;-webkit-text-stroke:0.3px #f3f3f3;">Model-5</div>
<div class="t" style="left:127.0px;width:800px;text-align:center;top:91.39px;font-size:10.7px;font-weight:700;color:#f3f3f3;transform:scaleX(0.98);transform-origin:50% 0;-webkit-text-stroke:0.3px #f3f3f3;">Model-6</div>
<div class="t" style="left:179.5px;width:800px;text-align:center;top:91.39px;font-size:10.7px;font-weight:700;color:#f3f3f3;transform:scaleX(0.98);transform-origin:50% 0;-webkit-text-stroke:0.3px #f3f3f3;">Model-7</div>
<div class="t" style="left:232.5px;width:800px;text-align:center;top:91.39px;font-size:10.7px;font-weight:700;color:#f3f3f3;transform:scaleX(0.98);transform-origin:50% 0;-webkit-text-stroke:0.3px #f3f3f3;">Model-8</div>
<div class="t" style="left:285.5px;width:800px;text-align:center;top:91.39px;font-size:10.7px;font-weight:700;color:#f3f3f3;transform:scaleX(0.98);transform-origin:50% 0;-webkit-text-stroke:0.3px #f3f3f3;">Model-9</div>
<div class="t" style="left:340.5px;width:800px;text-align:center;top:91.39px;font-size:10.7px;font-weight:700;color:#f3f3f3;transform:scaleX(0.98);transform-origin:50% 0;-webkit-text-stroke:0.3px #f3f3f3;">Model-10</div>
<div class="t" style="left:397.5px;width:800px;text-align:center;top:91.39px;font-size:10.7px;font-weight:700;color:#f3f3f3;transform:scaleX(0.98);transform-origin:50% 0;-webkit-text-stroke:0.3px #f3f3f3;">Model-11</div>
<div class="t" style="left:454.5px;width:800px;text-align:center;top:91.39px;font-size:10.7px;font-weight:700;color:#f3f3f3;transform:scaleX(0.98);transform-origin:50% 0;-webkit-text-stroke:0.3px #f3f3f3;">Model-12</div>
<div class="t" style="left:511.5px;width:800px;text-align:center;top:91.39px;font-size:10.7px;font-weight:700;color:#f3f3f3;transform:scaleX(0.98);transform-origin:50% 0;-webkit-text-stroke:0.3px #f3f3f3;">Model-13</div>
<div class="t" style="left:568.5px;width:800px;text-align:center;top:91.39px;font-size:10.7px;font-weight:700;color:#f3f3f3;transform:scaleX(0.98);transform-origin:50% 0;-webkit-text-stroke:0.3px #f3f3f3;">Model-14</div>
<div class="t" style="left:76.9px;top:110.89px;font-size:10.7px;font-weight:700;color:#f3f3f3;transform:scaleX(0.951);transform-origin:0 0;-webkit-text-stroke:0.3px #f3f3f3;">Short Tied Column Nos</div>
<div class="t" style="left:76.9px;top:130.39px;font-size:10.7px;font-weight:700;color:#f3f3f3;transform:scaleX(0.951);transform-origin:0 0;-webkit-text-stroke:0.3px #f3f3f3;">Short Column Length- L (in)</div>
<div class="t" style="left:76.9px;top:149.89px;font-size:10.7px;font-weight:700;color:#f3f3f3;transform:scaleX(0.951);transform-origin:0 0;-webkit-text-stroke:0.3px #f3f3f3;">Short Column Breadth- B (in)</div>
<div class="t" style="left:76.9px;top:169.39px;font-size:10.7px;font-weight:700;color:#f3f3f3;transform:scaleX(0.951);transform-origin:0 0;-webkit-text-stroke:0.3px #f3f3f3;">Clear Cover (in)</div>
<div class="t" style="left:76.9px;top:188.89px;font-size:10.7px;font-weight:700;color:#f3f3f3;transform:scaleX(0.951);transform-origin:0 0;-webkit-text-stroke:0.3px #f3f3f3;">Short Column Height- H (ft)</div>
<div class="t" style="left:76.9px;top:227.89px;font-size:10.7px;font-weight:700;color:#f3f3f3;transform:scaleX(0.951);transform-origin:0 0;-webkit-text-stroke:0.3px #f3f3f3;">Rebar Size (mm)</div>
<div class="t" style="left:76.9px;top:247.39px;font-size:10.7px;font-weight:700;color:#f3f3f3;transform:scaleX(0.951);transform-origin:0 0;-webkit-text-stroke:0.3px #f3f3f3;">Rebar Nos</div>
<div class="t" style="left:76.9px;top:266.89px;font-size:10.7px;font-weight:700;color:#f3f3f3;transform:scaleX(0.951);transform-origin:0 0;-webkit-text-stroke:0.3px #f3f3f3;">Rebar Size (mm)</div>
<div class="t" style="left:76.9px;top:286.39px;font-size:10.7px;font-weight:700;color:#f3f3f3;transform:scaleX(0.951);transform-origin:0 0;-webkit-text-stroke:0.3px #f3f3f3;">Rebar Nos</div>
<div class="t" style="left:76.9px;top:325.39px;font-size:10.7px;font-weight:700;color:#f3f3f3;transform:scaleX(0.951);transform-origin:0 0;-webkit-text-stroke:0.3px #f3f3f3;">Rebar Size (mm)</div>
<div class="t" style="left:76.9px;top:344.89px;font-size:10.7px;font-weight:700;color:#f3f3f3;transform:scaleX(0.951);transform-origin:0 0;-webkit-text-stroke:0.3px #f3f3f3;">Specing (in) c/c</div>
<div class="t" style="left:76.9px;top:364.39px;font-size:10.7px;font-weight:700;color:#f3f3f3;transform:scaleX(0.951);transform-origin:0 0;-webkit-text-stroke:0.3px #f3f3f3;">Houck Lenght (in)</div>
<div class="t" style="left:78.8px;top:383.89px;font-size:10.7px;font-weight:700;color:#f3f3f3;transform:scaleX(0.951);transform-origin:0 0;-webkit-text-stroke:0.3px #f3f3f3;">Lenght (ft)</div>
<div class="t" style="left:78.8px;top:403.39px;font-size:10.7px;font-weight:700;color:#f3f3f3;transform:scaleX(0.951);transform-origin:0 0;-webkit-text-stroke:0.3px #f3f3f3;">Lenght (ft)</div>
<div class="t" style="left:-363px;width:800px;text-align:center;top:132.49px;font-size:10.7px;font-weight:700;color:#f3f3f3;transform:scaleX(0.95);transform-origin:50% 0;-webkit-text-stroke:0.3px #f3f3f3;">Concrete</div>
<div class="t" style="left:-363px;width:800px;text-align:center;top:148.09px;font-size:10.7px;font-weight:700;color:#f3f3f3;transform:scaleX(0.95);transform-origin:50% 0;-webkit-text-stroke:0.3px #f3f3f3;">Volume</div>
<div class="t" style="left:127px;width:800px;text-align:center;top:208.39px;font-size:10.7px;font-weight:700;color:#f3f3f3;transform:scaleX(0.943);transform-origin:50% 0;-webkit-text-stroke:0.3px #f3f3f3;">Short Tied Column Rebar Calculation</div>
<div class="t" style="left:-363px;width:800px;text-align:center;top:238.29px;font-size:10.7px;font-weight:700;color:#f3f3f3;transform:scaleX(0.95);transform-origin:50% 0;-webkit-text-stroke:0.3px #f3f3f3;">Big Dia</div>
<div class="t" style="left:-363px;width:800px;text-align:center;top:277.29px;font-size:10.7px;font-weight:700;color:#f3f3f3;transform:scaleX(0.95);transform-origin:50% 0;-webkit-text-stroke:0.3px #f3f3f3;">Narrow Dia</div>
<div class="t" style="left:-281px;width:800px;text-align:center;top:305.89px;font-size:10.7px;font-weight:700;color:#f3f3f3;transform:scaleX(0.95);transform-origin:50% 0;-webkit-text-stroke:0.3px #f3f3f3;">Development Length (in)</div>
<div class="t" style="left:-363px;width:800px;text-align:center;top:345.29px;font-size:10.7px;font-weight:700;color:#f3f3f3;transform:scaleX(0.95);transform-origin:50% 0;-webkit-text-stroke:0.3px #f3f3f3;">Tie Rod</div>
<div class="t" style="left:-363px;width:800px;text-align:center;top:383.89px;font-size:10.7px;font-weight:700;color:#f3f3f3;transform:scaleX(0.95);transform-origin:50% 0;-webkit-text-stroke:0.3px #f3f3f3;">Extra Tie -1</div>
<div class="t" style="left:-363px;width:800px;text-align:center;top:403.39px;font-size:10.7px;font-weight:700;color:#f3f3f3;transform:scaleX(0.95);transform-origin:50% 0;-webkit-text-stroke:0.3px #f3f3f3;">Extra Tie -2</div>
</div>
<div style="left:1008px;top:88px;width:16px;height:446px;background:#f5f5f5"></div>
<svg style="left:1012px;top:91px" width="10" height="8" viewBox="0 0 10 8"><path d="M5 1.5 L8.5 6 H1.5 Z" fill="#606060"/></svg>
<div style="left:1014px;top:129px;width:6.5px;height:44px;border-radius:3.5px;background:#7f7f7f"></div>
<svg style="left:1012px;top:526px" width="10" height="8" viewBox="0 0 10 8"><path d="M1.5 2 H8.5 L5 6.5 Z" fill="#606060"/></svg>
<div style="left:0;top:534px;width:1024px;height:22px;background:#f0f0f0"></div>
<div style="left:19px;top:534px;width:989px;height:2px;background:#fbfbfb"></div>
<svg style="left:19px;top:541px" width="9" height="10" viewBox="0 0 9 10"><path d="M6 1 L2 5 L6 9" fill="none" stroke="#b8b8b8" stroke-width="1.1"/></svg>
<svg style="left:44px;top:541px" width="9" height="10" viewBox="0 0 9 10"><path d="M3 1 L7 5 L3 9" fill="none" stroke="#b8b8b8" stroke-width="1.1"/></svg>
<div style="left:87px;top:534px;width:144px;height:21.5px;background:#fff"></div>
<div class="t" style="left:92.8px;top:544.36px;font-size:10.8px;font-weight:400;color:#262626;transform:scaleX(0.982);transform-origin:0 0;-webkit-text-stroke:0.45px #262626;">Short Tied Column Estimate</div>
<div style="left:93px;top:552px;width:133px;height:1px;background:#1f8a5a"></div>
<div style="left:235px;top:539px;width:1px;height:13px;background:#d5d5d5"></div>
<div class="t" style="left:245.5px;top:546.93px;font-size:10.3px;font-weight:400;color:#262626;transform:scaleX(0.955);transform-origin:0 0;">Dashboard</div>
<div style="left:305.5px;top:539px;width:1px;height:13px;background:#d5d5d5"></div>
<svg style="left:337px;top:541px" width="10" height="10" viewBox="0 0 10 10"><path d="M5 0.5 V9.5 M0.5 5 H9.5" stroke="#444" stroke-width="1"/></svg>
<div style="left:721.5px;top:543px;width:1.3px;height:1.3px;background:#555;box-shadow:0 2.5px 0 #555,0 5px 0 #555"></div>
<svg style="left:736px;top:542px" width="6" height="8" viewBox="0 0 6 8"><path d="M5 0.5 V7.5 L1 4 Z" fill="#606060"/></svg>
<div style="left:746.5px;top:543px;width:22.5px;height:7px;border-radius:3.5px;background:#8c8c8c"></div>
<svg style="left:1001px;top:542px" width="6" height="8" viewBox="0 0 6 8"><path d="M1 0.5 V7.5 L5 4 Z" fill="#606060"/></svg>
<div class="t" style="left:8.8px;top:567.45px;font-size:8.8px;font-weight:400;color:#262626;transform:scaleX(0.86);transform-origin:0 0;-webkit-text-stroke:0.25px #262626;">Ready</div>
<svg style="left:46px;top:561.5px" width="12" height="10" viewBox="0 0 12 10"><rect x="0.6" y="0.6" width="10.3" height="9" fill="none" stroke="#3a3a3a" stroke-width="1.1"/><path d="M0.6 2.6 H10.9" stroke="#3a3a3a" stroke-width="1"/><rect x="2" y="5" width="2.2" height="3" fill="none" stroke="#3a3a3a" stroke-width="0.9"/><circle cx="7.6" cy="6.3" r="2" fill="none" stroke="#3a3a3a" stroke-width="1"/><circle cx="7.6" cy="6.3" r="0.8" fill="#3a3a3a"/></svg>
<svg style="left:70px;top:561px" width="12" height="11" viewBox="0 0 12 11"><circle cx="5" cy="1.6" r="1.3" fill="none" stroke="#3a3a3a" stroke-width="1"/><path d="M0.8 4 Q5 2.6 9.4 4 M5 4 V6.8 M3.2 10.5 L5 6.8 L5.5 8 M6.4 6.8 L10.8 10.6 M10.8 6.8 L6.4 10.6" fill="none" stroke="#3a3a3a" stroke-width="1"/></svg>
<div class="t" style="left:83.5px;top:567.25px;font-size:8.8px;font-weight:700;color:#262626;transform:scaleX(0.89);transform-origin:0 0;">Accessibility: Investigate</div>
<div style="left:800.5px;top:559.5px;width:29px;height:15.5px;background:#e2e2e2"></div>
<svg style="left:809px;top:561px" width="11" height="10" viewBox="0 0 11 10"><path d="M0.6 0.6 H10.4 V9.4 H0.6 Z M0.6 3.5 H10.4 M0.6 6.5 H10.4 M3.9 0.6 V9.4 M7.1 0.6 V9.4" fill="none" stroke="#444" stroke-width="1"/></svg>
<svg style="left:839px;top:561px" width="11" height="10" viewBox="0 0 11 10"><path d="M0.6 0.6 H10.4 V9.4 H0.6 Z M2.4 2.4 H8.6 V7.6 H2.4 Z M2.4 4 H8.6 M2.4 6 H8.6" fill="none" stroke="#444" stroke-width="1"/></svg>
<svg style="left:869px;top:561px" width="11" height="10" viewBox="0 0 11 10"><path d="M0.6 0.6 H10.4 V9.4 H0.6 Z M0.6 6.6 H7.4 V0.6 M4 0.6 V3.6" fill="none" stroke="#444" stroke-width="1"/></svg>
<div style="left:894.5px;top:566.5px;width:5px;height:1px;background:#555"></div>
<div style="left:904px;top:566.5px;width:76px;height:1px;background:#9a9a9a"></div>
<div style="left:940px;top:563px;width:3.5px;height:8px;background:#6a6a6a;border-radius:1px"></div>
<svg style="left:982px;top:563px" width="8" height="8" viewBox="0 0 8 8"><path d="M4 0.5 V7.5 M0.5 4 H7.5" stroke="#555" stroke-width="0.9"/></svg>
<div class="t" style="left:218px;width:800px;text-align:right;top:567.32px;font-size:8.3px;font-weight:400;color:#333;transform:scaleX(0.95);transform-origin:100% 0;">100%</div>
</body></html>
